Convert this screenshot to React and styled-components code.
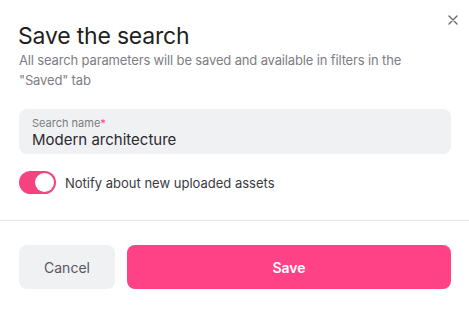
import React, { useState } from 'react';
import styled, { createGlobalStyle } from 'styled-components';

const GlobalStyle = createGlobalStyle`
    html, body {
        margin: 0;
        padding: 0;
        background: #ffffff;
        font-family: Inter, 'Noto Sans', sans-serif;
    }
`;

const Modal = styled.div`
    position: relative;
    width: 469px;
    height: 311px;
    background: #ffffff;
    display: flex;
    flex-direction: column;
`;

const CloseButton = styled.button`
    position: absolute;
    top: 12px;
    right: 8px;
    width: 16px;
    height: 16px;
    padding: 0;
    border: none;
    background: none;
    display: flex;
    align-items: center;
    justify-content: center;
    cursor: pointer;
`;

const Body = styled.div`
    padding: 22px 18px 0 19px;
    display: flex;
    flex-direction: column;
`;

const Title = styled.h2`
    margin: 0 0 0 -1px;
    font-size: 23px;
    line-height: 28px;
    font-weight: 400;
    color: #1f1f22;
    letter-spacing: -0.2px;
`;

const Subtitle = styled.p`
    margin: 0;
    font-size: 13px;
    line-height: 20px;
    color: #7d7d83;
    letter-spacing: -0.15px;
`;

const Field = styled.label`
    margin-top: 19px;
    height: 45px;
    box-sizing: border-box;
    padding: 7px 13px 0;
    background: #f0f1f3;
    border-radius: 8px;
    display: flex;
    flex-direction: column;
`;

const FieldLabel = styled.span`
    font-size: 11px;
    line-height: 14px;
    color: #7b7b80;

    & > em {
        font-style: normal;
        color: #ff4285;
    }
`;

const FieldInput = styled.input`
    border: none;
    background: transparent;
    outline: none;
    padding: 0;
    margin: 0;
    font-family: inherit;
    font-size: 15px;
    line-height: 20px;
    color: #2a2a2e;
`;

const ToggleRow = styled.label`
    margin-top: 17px;
    display: flex;
    align-items: center;
    gap: 9px;
    cursor: pointer;
`;

const Track = styled.span`
    width: 37px;
    height: 23px;
    border-radius: 12px;
    background: ${({ $on }) => ($on ? '#f6437f' : '#d5d6da')};
    box-sizing: border-box;
    padding: 2px;
    display: flex;
    justify-content: ${({ $on }) => ($on ? 'flex-end' : 'flex-start')};
`;

const Knob = styled.span`
    width: 19px;
    height: 19px;
    border-radius: 50%;
    background: #ffffff;
`;

const ToggleText = styled.span`
    font-size: 13px;
    color: #3a3a3f;
`;

const Divider = styled.hr`
    margin: 26px 0 0;
    border: none;
    border-top: 1px solid #e6e6e9;
`;

const Footer = styled.div`
    padding: 24px 18px 0 19px;
    display: flex;
    gap: 12px;
`;

const Button = styled.button`
    height: 44px;
    border: none;
    border-radius: 8px;
    font-family: inherit;
    font-size: 14px;
    cursor: pointer;
    background: ${({ $primary }) => ($primary ? '#ff4285' : '#f0f1f3')};
    color: ${({ $primary }) => ($primary ? '#ffffff' : '#56565c')};
    font-weight: ${({ $primary }) => ($primary ? 600 : 400)};
    width: ${({ $primary }) => ($primary ? 'auto' : '96px')};
    flex: ${({ $primary }) => ($primary ? 1 : 'none')};
`;

const App = () => {
    const [name, setName] = useState('Modern architecture');
    const [notify, setNotify] = useState(true);

    return (
        <>
            <GlobalStyle />
            <Modal>
                <CloseButton aria-label="Close">
                    <svg width="10" height="10" viewBox="0 0 10 10">
                        <path d="M1 1L9 9M9 1L1 9" stroke="#6b6b70" strokeWidth="1.4" strokeLinecap="round" />
                    </svg>
                </CloseButton>
                <Body>
                    <Title>Save the search</Title>
                    <Subtitle>
                        All search parameters will be saved and available in filters in the "Saved" tab
                    </Subtitle>
                    <Field>
                        <FieldLabel>
                            Search name<em>*</em>
                        </FieldLabel>
                        <FieldInput value={name} onChange={(e) => setName(e.target.value)} />
                    </Field>
                    <ToggleRow onClick={() => setNotify(!notify)}>
                        <Track $on={notify}>
                            <Knob />
                        </Track>
                        <ToggleText>Notify about new uploaded assets</ToggleText>
                    </ToggleRow>
                </Body>
                <Divider />
                <Footer>
                    <Button>Cancel</Button>
                    <Button $primary>Save</Button>
                </Footer>
            </Modal>
        </>
    );
};

export default App;
